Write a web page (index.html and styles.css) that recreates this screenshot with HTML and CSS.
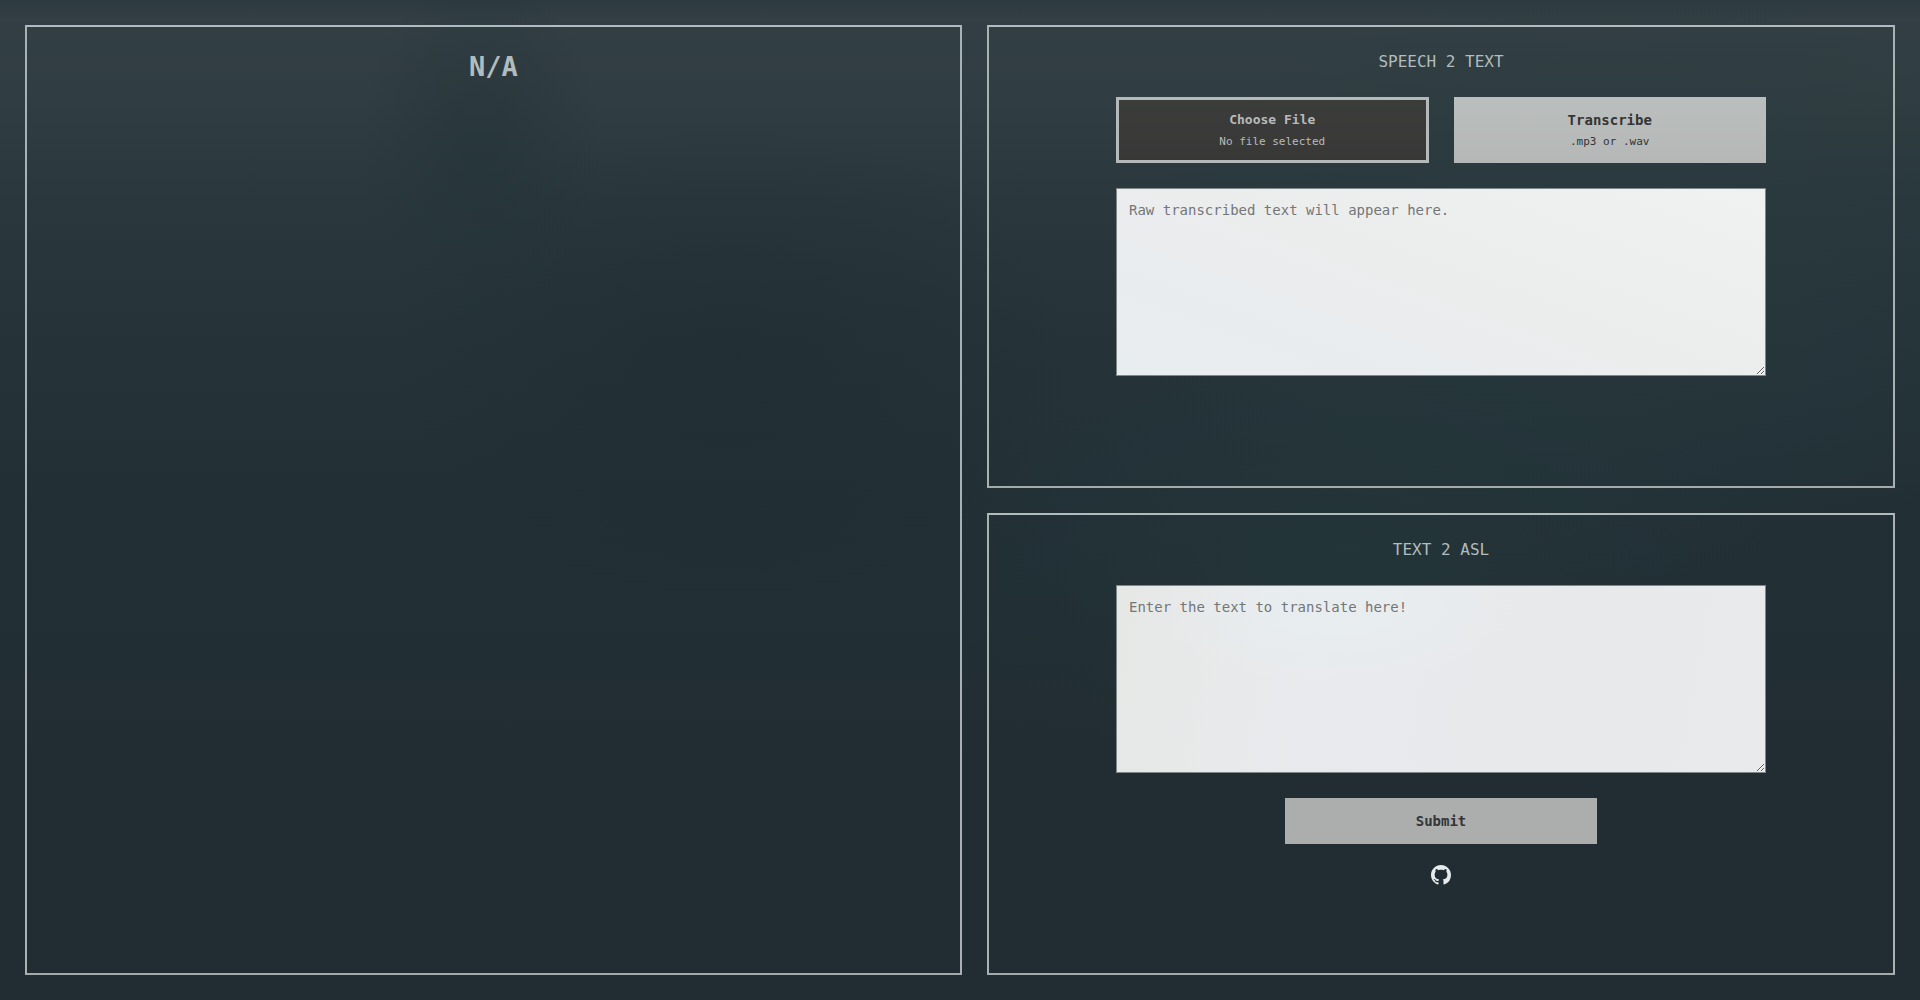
FILE: index.html
```html
<!DOCTYPE html>
<html lang="en">
<head>
<meta charset="utf-8">
<meta name="viewport" content="width=device-width, initial-scale=1">
<title>Speech 2 ASL</title>
<link rel="stylesheet" href="styles.css">
</head>
<body>
<main class="layout">
  <section class="panel viewer">
    <h1 class="sign">N/A</h1>
  </section>
  <div class="tools">
    <section class="panel">
      <h2 class="title" id="speech-title">SPEECH 2 TEXT</h2>
      <form class="form">
        <div class="actions">
          <button class="btn btn-dark" type="button"><span class="file-label">Choose File</span><small class="hint">No file selected</small></button>
          <button class="btn" type="button"><span class="label">Transcribe</span><small class="hint">.mp3 or .wav</small></button>
        </div>
        <textarea class="text" aria-labelledby="speech-title" placeholder="Raw transcribed text will appear here."></textarea>
      </form>
    </section>
    <section class="panel">
      <h2 class="title" id="asl-title">TEXT 2 ASL</h2>
      <form class="form">
        <textarea class="text text-asl" aria-labelledby="asl-title" placeholder="Enter the text to translate here!"></textarea>
        <button class="btn btn-submit" type="button"><span class="label">Submit</span></button>
      </form>
      <a class="github" href="#" aria-label="GitHub">
        <svg viewBox="0 0 16 16" width="20" height="20" fill="currentColor" aria-hidden="true"><path d="M8 0C3.58 0 0 3.58 0 8c0 3.54 2.29 6.53 5.47 7.59.4.07.55-.17.55-.38 0-.19-.01-.82-.01-1.49-2.01.37-2.53-.49-2.69-.94-.09-.23-.48-.94-.82-1.13-.28-.15-.68-.52-.01-.53.63-.01 1.08.58 1.23.82.72 1.21 1.87.87 2.33.66.07-.52.28-.87.51-1.07-1.78-.2-3.64-.89-3.64-3.95 0-.87.31-1.59.82-2.15-.08-.2-.36-1.02.08-2.12 0 0 .67-.21 2.2.82.64-.18 1.32-.27 2-.27s1.36.09 2 .27c1.53-1.04 2.2-.82 2.2-.82.44 1.1.16 1.92.08 2.12.51.56.82 1.27.82 2.15 0 3.07-1.87 3.75-3.65 3.95.29.25.54.73.54 1.48 0 1.07-.01 1.93-.01 2.2 0 .21.15.46.55.38A8.01 8.01 0 0 0 16 8c0-4.42-3.58-8-8-8z"/></svg>
      </a>
    </section>
  </div>
</main>
</body>
</html>
```
FILE: styles.css
```css
* {
  box-sizing: border-box;
}

body {
  margin: 0;
  font-family: "DejaVu Sans Mono", "Liberation Mono", monospace;
  color: #b3bcbf;
  background:
    linear-gradient(rgba(36, 50, 56, 0.4), rgba(36, 50, 56, 0) 20px),
    radial-gradient(ellipse 120px 180px at 25% 15%, rgba(34, 50, 54, 0.5), transparent),
    radial-gradient(ellipse 340px 240px at 38% 36%, rgba(30, 42, 48, 0.5), transparent),
    radial-gradient(ellipse 480px 300px at 84% 28%, rgba(38, 60, 62, 0.4), transparent),
    radial-gradient(ellipse 420px 240px at 70% 55%, rgba(38, 60, 62, 0.4), transparent),
    linear-gradient(#333f44 0%, #303d42 10%, #2a383d 20%, #26343a 32%, #223036 50%, #212d32 75%, #212d32 100%);
}

.layout {
  display: grid;
  grid-template-columns: 937fr 908fr;
  gap: 25px;
  min-height: 100vh;
  padding: 25px;
}

.tools {
  display: grid;
  grid-template-rows: 1fr 1fr;
  gap: 25px;
}

.panel {
  display: flex;
  flex-direction: column;
  align-items: center;
  padding: 23px;
  border: 2px solid;
  border-color: #b2bbbe #a9b1b3 #a5abac;
}

.sign {
  margin: 0;
  font-size: 27px;
  line-height: 34px;
  color: #b2bbbd;
}

.title {
  margin: 0 0 23px;
  font-size: 16px;
  font-weight: 400;
  line-height: 24px;
}

.form {
  display: flex;
  flex-direction: column;
  align-items: center;
  gap: 25px;
  width: 100%;
  max-width: 650px;
}

.actions {
  display: grid;
  grid-template-columns: 1fr 1fr;
  gap: 25px;
  width: 100%;
}

.btn {
  display: flex;
  flex-direction: column;
  align-items: center;
  justify-content: center;
  gap: 4px;
  height: 66px;
  padding: 0;
  border: 0;
  font-family: inherit;
  color: #333536;
  background: linear-gradient(#babebd, #b5b8b6);
}

.btn-dark {
  border: 3px solid #b4b9b9;
  color: #b9bab9;
  background: linear-gradient(#3b3d3b, #383837);
}

.btn-submit {
  width: 48%;
  height: 46px;
  background: #acaeae;
}

.file-label {
  font-size: 13px;
  font-weight: 700;
  line-height: 20px;
}

.label {
  font-size: 14px;
  font-weight: 700;
  line-height: 20px;
}

.hint {
  font-size: 11px;
  line-height: 16px;
}

.text {
  display: block;
  width: 100%;
  height: 188px;
  padding: 12px;
  border: 1px solid #7f8889;
  font-family: inherit;
  font-size: 14px;
  line-height: 18px;
  color: #333536;
  background: linear-gradient(20deg, #e8edef, #eaecee 35%, #eceeed 60%, #f0f1f1);
}

.text-asl {
  background:
    radial-gradient(ellipse 180px 80px at 33% 10%, #e7eef0, transparent),
    linear-gradient(100deg, #e6e8e6, #e9eaed 30%, #e8e9eb 70%, #e9eaeb);
}

.text::placeholder {
  color: #747678;
}

.github {
  display: flex;
  margin-top: 21px;
  color: #e7ebee;
}

@media (max-width: 900px) {
  .layout {
    grid-template-columns: 1fr;
  }
}
```
